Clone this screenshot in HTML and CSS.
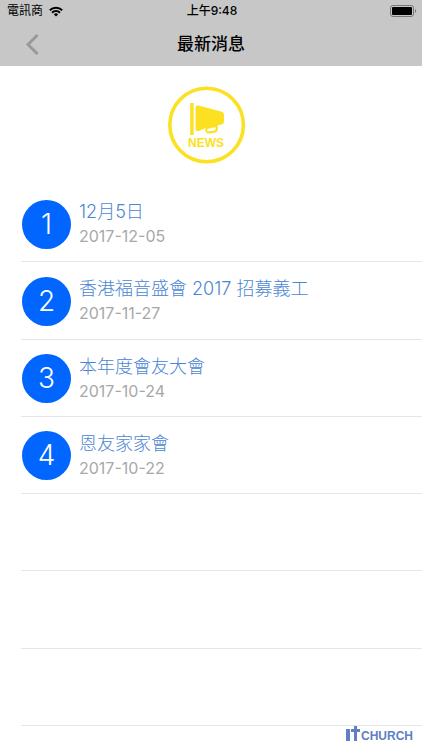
FILE: index.html
```
<!DOCTYPE html>
<html lang="zh-Hant">
<head>
    <meta charset="UTF-8">
    <meta name="viewport" content="width=device-width, initial-scale=1.0">
    <title>最新消息</title>
    <link rel="stylesheet" href="styles.css">
</head>
<body>
    <header class="header">
        <div class="status">
            <div class="carrier">
                <span>電訊商</span>
                <svg width="14" height="11" viewBox="0 0 14 11" fill="none" stroke="#000" stroke-width="2">
                    <path d="M0.8 4.2a9 9 0 0 1 12.4 0"/>
                    <path d="M3 6.7a5.8 5.8 0 0 1 8 0"/>
                    <path d="M7 10.6L4.9 8.4a3 3 0 0 1 4.2 0z" fill="#000" stroke="none"/>
                </svg>
            </div>
            <div class="time">上午9:48</div>
            <svg class="battery" width="27" height="12" viewBox="0 0 27 12">
                <rect x="0.5" y="0.5" width="23" height="11" rx="2.5" fill="none" stroke="#777"/>
                <rect x="2" y="2" width="20" height="8" rx="1" fill="#000"/>
                <path d="M25 4v4c1.6-.5 1.6-3.5 0-4z" fill="#777"/>
            </svg>
        </div>
        <div class="navbar">
            <button class="back" aria-label="返回">
                <svg width="13" height="21" viewBox="0 0 13 21" fill="none" stroke="#999" stroke-width="3">
                    <path d="M11.5 1L2 10.5l9.5 9.5"/>
                </svg>
            </button>
            <h1>最新消息</h1>
        </div>
    </header>

    <main>
        <div class="banner">
            <svg width="78" height="78" viewBox="0 0 78 78" role="img" aria-label="NEWS">
                <circle cx="38.6" cy="39" r="36.8" fill="none" stroke="#fbe122" stroke-width="3.6"/>
                <rect x="22.2" y="17" width="3.4" height="32" fill="#fbe122"/>
                <path d="M27.5 22q0-3 3-2.4L53 25.500q3 .8 3 3.500v6.500q0 2.500-2.500 3L37.500 42l-6.500 3q-3.500.5-3.500-2.500z" fill="#fbe122"/>
                <path d="M39 42q-1.200 1-.6 2.800.8 2 3 1.600l5-.8q2.600-.5 2.400-3l-.3-3z" fill="#fff" stroke="#fbe122" stroke-width="2.2"/>
                <text x="38" y="61" text-anchor="middle">NEWS</text>
            </svg>
        </div>

        <ul class="list">
            <li>
                <span class="number">1</span>
                <div class="info">
                    <a href="#">12月5日</a>
                    <time datetime="2017-12-05">2017-12-05</time>
                </div>
            </li>
            <li>
                <span class="number">2</span>
                <div class="info">
                    <a href="#">香港福音盛會 2017 招募義工</a>
                    <time datetime="2017-11-27">2017-11-27</time>
                </div>
            </li>
            <li>
                <span class="number">3</span>
                <div class="info">
                    <a href="#">本年度會友大會</a>
                    <time datetime="2017-10-24">2017-10-24</time>
                </div>
            </li>
            <li>
                <span class="number">4</span>
                <div class="info">
                    <a href="#">恩友家家會</a>
                    <time datetime="2017-10-22">2017-10-22</time>
                </div>
            </li>
            <li></li>
            <li></li>
            <li></li>
        </ul>
    </main>

    <footer class="footer">
        <svg width="15" height="16" viewBox="0 0 15 16" fill="#5f80c4">
            <rect x="0" y="3" width="4" height="12"/>
            <path d="M8 0h3v3h3v3h-3v9H8V6H5V3h3z"/>
        </svg>
        <span>CHURCH</span>
    </footer>
</body>
</html>
```
FILE: styles.css
```
* {
    box-sizing: border-box;
    margin: 0;
    padding: 0;
}

body {
    display: flex;
    flex-direction: column;
    min-height: 100vh;
    background: #fff;
    font-family: Inter, "Noto Sans CJK TC", sans-serif;
}

.header {
    background: #c7c7c7;
    height: 66px;
}

.status {
    display: grid;
    grid-template-columns: 1fr auto 1fr;
    align-items: center;
    height: 22px;
    padding: 0 5px 0 7px;
    font-size: 12px;
    line-height: 22px;
}

.carrier {
    display: flex;
    align-items: center;
    gap: 6px;
}

.time {
    font-weight: 500;
}

.battery {
    justify-self: end;
}

.navbar {
    display: grid;
    grid-template-columns: 64px 1fr 64px;
    align-items: center;
    height: 44px;
}

.back {
    display: flex;
    align-items: center;
    height: 44px;
    padding-left: 26px;
    border: none;
    background: none;
    cursor: pointer;
}

h1 {
    font-size: 17px;
    font-weight: 500;
    line-height: 44px;
    text-align: center;
}

main {
    flex: 1;
    display: flex;
    flex-direction: column;
}

.banner {
    display: flex;
    justify-content: center;
    height: 119px;
    padding: 20px 8px 0 0;
}

.banner text {
    fill: #fbe122;
    font-family: "Liberation Sans", sans-serif;
    font-size: 12px;
    font-weight: bold;
}

.list {
    flex: 1;
    display: grid;
    grid-auto-rows: 1fr;
    margin-left: 21px;
    list-style: none;
}

.list li {
    display: flex;
    align-items: center;
    gap: 8px;
    min-height: 72px;
    padding: 2px 0 0 1px;
    border-bottom: 1px solid #e6e6e8;
}

.number {
    width: 49px;
    height: 49px;
    border-radius: 50%;
    background: #0066ff;
    color: #fff;
    font-size: 28px;
    font-weight: 300;
    line-height: 49px;
    text-align: center;
}

.info a {
    display: block;
    color: #4b86d2;
    font-size: 18px;
    font-weight: 300;
    line-height: 25px;
    text-decoration: none;
}

.info time {
    display: block;
    color: #a8a8a8;
    font-size: 16px;
    line-height: 25px;
}

.footer {
    display: flex;
    justify-content: flex-end;
    align-items: flex-start;
    height: 24px;
    padding-right: 9px;
    color: #5f80c4;
    font-family: "Liberation Sans", sans-serif;
    font-size: 12px;
    font-weight: bold;
    line-height: 20px;
}
```
